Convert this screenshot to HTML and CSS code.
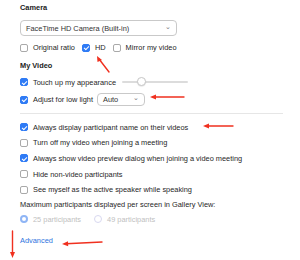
FILE: index.html
```html
<!DOCTYPE html>
<html>
<head>
<meta charset="UTF-8">
<title>Video settings</title>
<link rel="stylesheet" href="styles.css">
</head>
<body>
<div class="panel">
	<div class="heading camera-h">Camera</div>
	<div class="select cam-select">
		<span>FaceTime HD Camera (Built-in)</span>
		<span class="chev">&#8964;</span>
	</div>
	<div class="row cam-opts">
		<span class="check"></span><span class="lbl">Original ratio</span>
		<span class="check on"></span><span class="lbl">HD</span>
		<span class="check"></span><span class="lbl">Mirror my video</span>
	</div>

	<div class="heading video-h">My Video</div>
	<div class="row touch">
		<span class="check on"></span><span class="lbl">Touch up my appearance</span>
		<div class="slider"><span class="knob"></span></div>
	</div>
	<div class="row adjust">
		<span class="check on"></span><span class="lbl">Adjust for low light</span>
		<div class="select auto-select">
			<span>Auto</span>
			<span class="chev">&#8964;</span>
		</div>
	</div>

	<hr class="divider">

	<div class="list">
		<div class="row"><span class="check on"></span><span class="lbl">Always display participant name on their videos</span></div>
		<div class="row"><span class="check"></span><span class="lbl">Turn off my video when joining a meeting</span></div>
		<div class="row"><span class="check on"></span><span class="lbl">Always show video preview dialog when joining a video meeting</span></div>
		<div class="row"><span class="check"></span><span class="lbl">Hide non-video participants</span></div>
		<div class="row"><span class="check"></span><span class="lbl">See myself as the active speaker while speaking</span></div>
	</div>
	<div class="max-lbl">Maximum participants displayed per screen in Gallery View:</div>
	<div class="row radios">
		<span class="radio on"></span><span class="lbl dim">25 participants</span>
		<span class="radio"></span><span class="lbl dim">49 participants</span>
	</div>
	<a class="advanced" href="#">Advanced</a>
</div>

<!-- red annotation arrows drawn over the screenshot -->
<svg class="marks" width="300" height="260" viewBox="0 0 300 260">
	<g stroke="#f0301f" stroke-width="1.4" fill="#f0301f" stroke-linecap="round">
		<line x1="109" y1="72" x2="99" y2="59"/>
		<polygon points="97,56 102,60 97.5,62" stroke="none"/>
		<line x1="184" y1="97" x2="154" y2="97"/>
		<polygon points="150,97 156,94.5 156,99.5" stroke="none"/>
		<line x1="233" y1="126" x2="207" y2="126"/>
		<polygon points="203,126 209,123.5 209,128.5" stroke="none"/>
		<line x1="102" y1="242" x2="66" y2="243.8"/>
		<polygon points="62,244 68,241.3 68.2,246.3" stroke="none"/>
		<line x1="12.5" y1="231" x2="12.5" y2="254"/>
		<polygon points="12.5,258 10,252 15,252" stroke="none"/>
	</g>
</svg>
</body>
</html>
```

FILE: styles.css
```css
body{margin:0; background:#fff; font-family:"Liberation Sans", Arial, sans-serif; font-size:7.4px; color:#262626;}
.panel{padding:1px 17px 0 20px; width:263px; box-sizing:content-box;}
.heading{font-weight:bold; height:14px; line-height:14px; color:#222;}
.camera-h{margin-top:0;}
.video-h{margin-top:3px;}
.select{display:flex; align-items:center; justify-content:space-between; border:1px solid #c9c9c9; border-radius:4px; box-sizing:border-box; padding:0 5px 0 5px; background:#fff; color:#333;}
.cam-select{width:157px; height:16px; margin-top:5px;}
.chev{font-size:7px; color:#777; line-height:1; margin-top:-4px;}
.row{display:flex; align-items:center; height:15.6px;}
.cam-opts{margin-top:4px;}
.touch{margin-top:2px;}
.adjust{margin-top:1px; height:17px;}
.check{width:8px; height:8px; border:1px solid #a9a9a9; border-radius:2px; box-sizing:border-box; background:#fff; flex:none; position:relative;}
.check.on{background:#2f7bf5; border-color:#2f7bf5;}
.check.on::after{content:""; position:absolute; left:2.2px; top:0.6px; width:2px; height:4px; border:solid #fff; border-width:0 1px 1px 0; transform:rotate(45deg);}
.lbl{margin-left:5px; margin-right:7px; white-space:nowrap;}
.slider{width:66px; height:2px; background:#dcdcdc; border-radius:1px; position:relative; margin-left:-1px;}
.knob{position:absolute; left:15px; top:-4px; width:9px; height:9px; border-radius:50%; background:#fff; border:1px solid #c8c8c8; box-sizing:border-box; box-shadow:0 0.5px 1px rgba(0,0,0,0.15);}
.auto-select{width:48px; height:13px; margin-left:-3px;}
.divider{border:0; border-top:1px solid #e6e6e6; margin:5px 0 5px 0; width:263px;}
.list .row{height:15.7px;}
.max-lbl{height:15px; line-height:15px; margin-top:-1px;}
.radios{margin-top:0;}
.radio{width:8px; height:8px; border-radius:50%; border:1px solid #d8d8f0; box-sizing:border-box; flex:none;}
.radio.on{border:2.3px solid #8fb5f5; background:#fff;}
.dim{color:#c0c0c0; margin-right:13px;}
.advanced{display:block; color:#2d74e0; text-decoration:none; margin-top:7px; line-height:14px; width:36px;}
.marks{position:absolute; left:0; top:0; pointer-events:none;}
```
